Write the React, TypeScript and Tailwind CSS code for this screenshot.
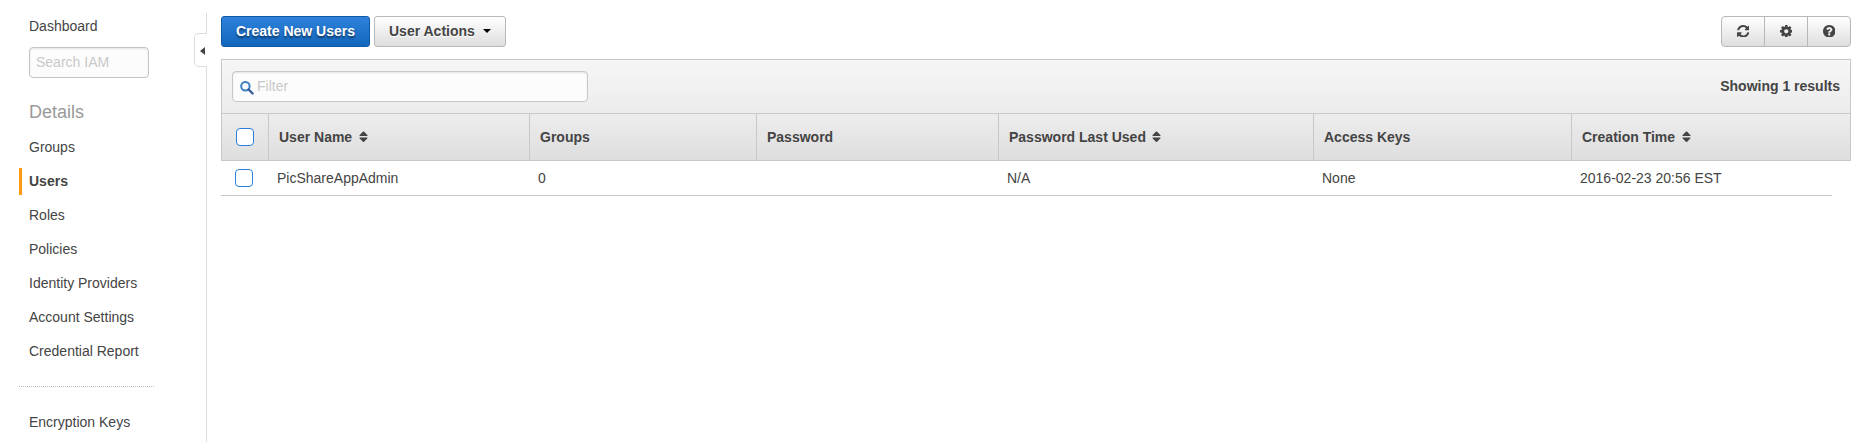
import React from "react";

const PATHS = {
  refresh:
    "M1511 928q0 5-1 7-64 268-268 434.5t-478 166.5q-146 0-282.5-55t-243.5-157l-129 129q-19 19-45 19t-45-19-19-45v-448q0-26 19-45t45-19h448q26 0 45 19t19 45-19 45l-137 137q71 66 161 102t187 36q134 0 250-65t186-179q11-17 53-117 8-23 30-23h192q13 0 22.5 9.5t9.5 22.5zm25-800v448q0 26-19 45t-45 19h-448q-26 0-45-19t-19-45 19-45l138-138q-148-137-349-137-134 0-250 65t-186 179q-11 17-53 117-8 23-30 23h-199q-13 0-22.5-9.5t-9.5-22.5v-7q65-268 270-434.5t480-166.5q146 0 284 55.5t245 156.5l130-129q19-19 45-19t45 19 19 45z",
  cog: "M1024 768q0-106-75-181t-181-75-181 75-75 181 75 181 181 75 181-75 75-181zm512-109v222q0 12-8 23t-20 13l-185 28q-19 54-39 91 35 50 107 138 10 12 10 25t-9 23q-27 37-99 108t-94 71q-12 0-26-9l-138-108q-44 23-91 38-16 136-29 186-7 28-36 28h-222q-14 0-24.5-8.5t-11.5-21.5l-28-184q-49-16-90-37l-141 107q-10 9-25 9-14 0-25-11-126-114-165-168-7-10-7-23 0-12 8-23 15-21 51-66.5t54-70.5q-27-50-41-99l-183-27q-13-2-21-12.5t-8-23.5v-222q0-12 8-23t19-13l186-28q14-46 39-92-40-57-107-138-10-12-10-24 0-10 9-23 26-36 98.5-107.5t94.5-71.5q13 0 26 10l138 107q44-23 91-38 16-136 29-186 7-28 36-28h222q14 0 24.5 8.5t11.5 21.5l28 184q49 16 90 37l142-107q9-9 24-9 13 0 25 10 129 119 165 170 7 8 7 22 0 12-8 23-15 21-51 66.5t-54 70.5q26 50 41 98l183 28q13 2 21 12.5t8 23.5z",
  help: "M896 1248v-192q0-14-9-23t-23-9h-192q-14 0-23 9t-9 23v192q0 14 9 23t23 9h192q14 0 23-9t9-23zm256-672q0-88-55.5-163t-138.5-116-170-41q-243 0-371 213-15 24 8 42l132 100q7 6 19 6 16 0 25-12 53-68 86-92 34-24 86-24 48 0 85.5 26t37.5 59q0 38-20 61t-68 45q-63 28-115.5 86.5t-52.5 125.5v36q0 14 9 23t23 9h192q14 0 23-9t9-23q0-19 21.5-49.5t54.5-49.5q32-18 49-28.5t46-35 44.5-48 28-60.5 12.5-81zm384 192q0 209-103 385.5t-279.5 279.5-385.5 103-385.5-103-279.5-279.5-103-385.5 103-385.5 279.5-279.5 385.5-103 385.5 103 279.5 279.5 103 385.5z",
};

function ToolIcon({ name }: { name: keyof typeof PATHS }) {
  return (
    <svg viewBox="0 0 1536 1536" className="size-[12.5px]" fill="currentColor">
      <path d={PATHS[name]} />
    </svg>
  );
}

function SortIcon() {
  return (
    <svg viewBox="0 0 9 12" className="ml-[6.5px] h-3 w-[9px]" fill="currentColor">
      <path d="M.5 4.2 4.1.6q.4-.4.8 0l3.6 3.6q.5.8-.4.8H.9Q0 5 .5 4.2zM.5 7.3Q0 6.5.9 6.5h7.2q.9 0 .4.8l-3.6 3.6q-.4.4-.8 0z" />
    </svg>
  );
}

function Checkbox({ label }: { label: string }) {
  return (
    <input
      type="checkbox"
      aria-label={label}
      className="block size-[18px] appearance-none rounded-[4px] border border-[#2a80dc] bg-white"
    />
  );
}

const navItems = ["Groups", "Users", "Roles", "Policies", "Identity Providers", "Account Settings", "Credential Report"];

function Sidebar() {
  return (
    <nav className="flex w-[135px] flex-col pt-[13px]">
      <a className="pl-[10px] leading-[26px]">Dashboard</a>
      <input
        placeholder="Search IAM"
        className="mt-2 ml-[10px] h-[31px] w-[120px] rounded-[4px] border border-[#c4c4c4] bg-[#fcfcfc] px-[6px] pb-px shadow-[inset_0_1px_2px_rgba(0,0,0,0.1)] placeholder:text-[#c9c9c9]"
      />
      <h2 className="mt-[22px] pl-[10px] text-[18px] leading-6 text-[#999]">Details</h2>
      <ul className="mt-[10px] flex flex-col gap-[7px]">
        {navItems.map((item) => (
          <li
            key={item}
            className={
              item === "Users"
                ? "border-l-3 border-[#ff9914] pl-[7px] leading-[27px] font-bold"
                : "pl-[10px] leading-[27px]"
            }
          >
            {item}
          </li>
        ))}
      </ul>
      <div className="mt-[21px] border-t border-dotted border-[#bbb]" />
      <a className="mt-[22px] pl-[10px] leading-[27px]">Encryption Keys</a>
    </nav>
  );
}

const columns = [
  { title: "User Name", sortable: true, value: "PicShareAppAdmin" },
  { title: "Groups", sortable: false, value: "0" },
  { title: "Password", sortable: false, value: "" },
  { title: "Password Last Used", sortable: true, value: "N/A" },
  { title: "Access Keys", sortable: false, value: "None" },
  { title: "Creation Time", sortable: true, value: "2016-02-23 20:56 EST" },
];

export default function App() {
  return (
    <div className="flex h-[442px] w-[1857px] overflow-hidden bg-white pl-[19px] font-['Liberation_Sans',Arial,sans-serif] text-[14px] text-[#444]">
      <Sidebar />

      <div className="ml-10 flex w-[13px] flex-col pt-[13px]">
        <div className="h-5 border-r border-[#dcdcdc]" />
        <button
          aria-label="Collapse"
          className="flex h-[34px] w-[13px] items-center justify-end rounded-l-[5px] border border-r-0 border-[#dcdcdc] bg-white pr-[2px] pt-px"
        >
          <svg viewBox="0 0 5 8" className="h-2 w-[5px]" fill="#444">
            <path d="M5 0v8L0 4z" />
          </svg>
        </button>
        <div className="grow border-r border-[#dcdcdc]" />
      </div>

      <main className="ml-[14px] flex w-[1630px] flex-col pt-4">
        <div className="flex h-[31px] gap-1 font-bold">
          <button className="w-[149px] rounded-[3px] border border-[#0d5aa7] bg-linear-to-b from-[#2e82dc] to-[#1166bb] pb-px text-white [text-shadow:0_2px_2px_rgba(0,0,0,0.5)]">
            Create New Users
          </button>
          <button className="flex w-[132px] items-center rounded-[3px] border border-[#b8b8b8] bg-linear-to-b from-white to-[#dedede] pl-[14px] [text-shadow:0_1px_0_#fff]">
            User Actions
            <svg viewBox="0 0 8 4" className="mb-px ml-2 h-1 w-2" fill="#000">
              <path d="M0 0h8L4 4z" />
            </svg>
          </button>
          <div className="ml-auto flex w-[130px] divide-x divide-[#b8b8b8] rounded-[4px] border border-[#b8b8b8] bg-linear-to-b from-white to-[#dedede]">
            <button aria-label="Refresh" className="flex w-[43px] items-center justify-center pb-px">
              <ToolIcon name="refresh" />
            </button>
            <button aria-label="Settings" className="flex w-[43px] items-center justify-center pb-px">
              <ToolIcon name="cog" />
            </button>
            <button aria-label="Help" className="flex grow items-center justify-center pb-px">
              <ToolIcon name="help" />
            </button>
          </div>
        </div>

        <section className="mt-3 border border-[#c8c8c8] font-bold">
          <div className="flex h-[53px] items-center justify-between bg-linear-to-b from-[#f6f6f6] to-[#ececec] px-[10px]">
            <label className="flex h-[31px] w-[356px] items-center rounded-[4px] border border-[#c8c8c8] bg-[#fcfcfc] pl-[7px] font-normal shadow-[inset_0_1px_2px_rgba(0,0,0,0.1)]">
              <svg viewBox="0 0 14 14" className="mt-[3px] size-[14px]" fill="none">
                <circle cx="5.4" cy="5.3" r="4.2" stroke="#3a80c2" strokeWidth="2" />
                <path d="m8.6 8.5 4 4" stroke="#345a9c" strokeWidth="2.4" strokeLinecap="round" />
              </svg>
              <input placeholder="Filter" className="ml-[3px] w-[300px] pb-px placeholder:text-[#c9c9c9]" />
            </label>
            <span className="pb-px">Showing 1 results</span>
          </div>
          <div className="grid h-[47px] grid-cols-[46px_261px_227px_242px_315px_258px_1fr] border-t border-[#c8c8c8] bg-linear-to-b from-[#ededed] to-[#dedede]">
            <div className="flex items-center pl-[14px]">
              <Checkbox label="Select all" />
            </div>
            {columns.map((column) => (
              <div key={column.title} className="flex items-center border-l border-[#c8c8c8] pl-[10px]">
                {column.title}
                {column.sortable && <SortIcon />}
              </div>
            ))}
          </div>
        </section>

        <div className="grid h-[35px] w-[1611px] grid-cols-[47px_261px_227px_242px_315px_258px_1fr] border-b border-[#c8c8c8]">
          <div className="flex items-center pl-[14px]">
            <Checkbox label="Select PicShareAppAdmin" />
          </div>
          {columns.map((column) => (
            <div key={column.title} className="flex items-center pl-[9px]">
              {column.value}
            </div>
          ))}
        </div>
      </main>
    </div>
  );
}
